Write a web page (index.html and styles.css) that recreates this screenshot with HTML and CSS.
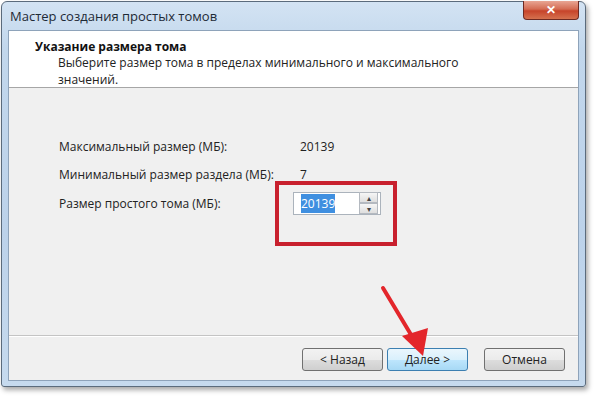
FILE: index.html
```html
<!DOCTYPE html>
<html lang="ru">
<head>
    <meta charset="UTF-8">
    <title>Мастер создания простых томов</title>
    <link rel="stylesheet" href="styles.css">
</head>
<body>
<div class="window">
    <div class="titlebar">
        <span class="title">Мастер создания простых томов</span>
        <span class="close">&#x2715;</span>
    </div>
    <div class="client">
        <div class="header">
            <h1>Указание размера тома</h1>
            <p>Выберите размер тома в пределах минимального и максимального<br>значений.</p>
        </div>
        <div class="content">
            <div class="fields">
                <span class="label">Максимальный размер (МБ):</span>
                <span class="value">20139</span>
                <span class="label">Минимальный размер раздела (МБ):</span>
                <span class="value">7</span>
                <span class="label">Размер простого тома (МБ):</span>
                <div class="spin">
                    <span class="spin-text"><span class="sel">20139</span></span>
                    <span class="spin-buttons">
                        <span class="spin-btn">&#x25B4;</span>
                        <span class="spin-btn">&#x25BE;</span>
                    </span>
                </div>
            </div>
            <div class="highlight"></div>
        </div>
        <div class="footer">
            <button class="btn">&lt; Назад</button>
            <button class="btn default">Далее &gt;</button>
            <button class="btn cancel">Отмена</button>
        </div>
    </div>
</div>

<svg class="arrow" width="600" height="400" viewBox="0 0 600 400">
    <line x1="383" y1="288" x2="413" y2="338" stroke="#e3262b" stroke-width="4" stroke-linecap="round"/>
    <polygon points="423,356 402,336 428,328" fill="#e3262b"/>
</svg>
</body>
</html>
```

FILE: styles.css
```css
body {
    margin: 0;
    width: 600px;
    height: 400px;
    background-color: #ffffff;
    font-family: "Open Sans", "Liberation Sans", sans-serif;
    position: relative;
    overflow: hidden;
}
.window {
    margin: 1px 0 0 1px;
    width: 585px;
    height: 386px;
    border: 1px solid #5b6b7c;
    border-radius: 6px 6px 3px 3px;
    background: linear-gradient(180deg, #d3e3f3 0%, #c2d7ec 12%, #bcd2ea 60%, #c6daee 100%);
    box-shadow: 2px 3px 5px rgba(0, 0, 0, 0.35);
    display: flex;
    flex-direction: column;
    padding: 0 6px 5px 6px;
    box-sizing: border-box;
}
.titlebar {
    height: 28px;
    display: flex;
    justify-content: space-between;
    align-items: flex-start;
}
.title {
    font-size: 13px;
    color: #1e2a36;
    margin: 5px 0 0 2px;
}
.close {
    width: 54px;
    height: 18px;
    margin-top: -1px;
    border: 1px solid #6e2a22;
    border-top: none;
    border-radius: 0 0 4px 4px;
    background: linear-gradient(180deg, #e8a593 0%, #d46c53 45%, #c7442a 55%, #d5714f 100%);
    color: #ffffff;
    font-size: 12px;
    font-weight: bold;
    text-align: center;
    line-height: 17px;
}
.client {
    flex: 1;
    display: flex;
    flex-direction: column;
    border: 1px solid #8ea3ba;
    background-color: #f0f0f0;
}
.header {
    height: 57px;
    background-color: #ffffff;
    border-bottom: 1px solid #a6a6a6;
    padding: 8px 0 0 26px;
    box-sizing: border-box;
}
h1 {
    margin: 0;
    font-size: 12px;
    font-weight: bold;
    color: #111111;
    line-height: 15px;
}
.header p {
    margin: 0 0 0 23px;
    font-size: 12px;
    line-height: 17px;
    color: #222222;
}
.content {
    flex: 1;
    position: relative;
}
.fields {
    display: grid;
    grid-template-columns: 234px auto;
    grid-auto-rows: 28.5px;
    align-items: center;
    padding: 44px 0 0 50px;
    font-size: 12px;
    color: #222222;
}
.value {
    padding-left: 7px;
}
.spin {
    width: 88px;
    height: 23px;
    border: 1px solid #abb3bc;
    background-color: #ffffff;
    display: flex;
    align-items: center;
    justify-content: space-between;
    box-sizing: border-box;
}
.spin-text {
    padding-left: 7px;
}
.sel {
    background-color: #3f8fe0;
    color: #ffffff;
    padding: 1px 0;
}
.spin-buttons {
    display: flex;
    flex-direction: column;
    margin-right: 2px;
}
.spin-btn {
    width: 17px;
    height: 9px;
    border: 1px solid #b4b9c0;
    background: linear-gradient(180deg, #f6f6f6, #dedede);
    font-size: 8px;
    line-height: 9px;
    text-align: center;
    color: #444444;
}
.highlight {
    position: absolute;
    left: 266px;
    top: 93px;
    width: 122px;
    height: 65px;
    border: 4px solid #c8202e;
    box-sizing: border-box;
}
.footer {
    height: 45px;
    border-top: 1px solid #c4c4c4;
    box-shadow: inset 0 1px 0 #ffffff;
    display: flex;
    justify-content: flex-end;
    align-items: flex-start;
    padding: 12px 13px 0 0;
    box-sizing: border-box;
}
.btn {
    width: 81px;
    height: 23px;
    border: 1px solid #707070;
    border-radius: 3px;
    background: linear-gradient(180deg, #f2f2f2 0%, #ebebeb 50%, #dddddd 51%, #cfcfcf 100%);
    font-family: "Open Sans", "Liberation Sans", sans-serif;
    font-size: 12px;
    color: #222222;
    padding: 0;
    margin-left: 4px;
}
.btn.default {
    border-color: #3c7fb1;
    background: linear-gradient(180deg, #eaf6fd 0%, #d9f0fc 50%, #bee6fd 51%, #a7d9f5 100%);
}
.btn.cancel {
    margin-left: 16px;
}
.arrow {
    position: absolute;
    left: 0;
    top: 0;
}
```
